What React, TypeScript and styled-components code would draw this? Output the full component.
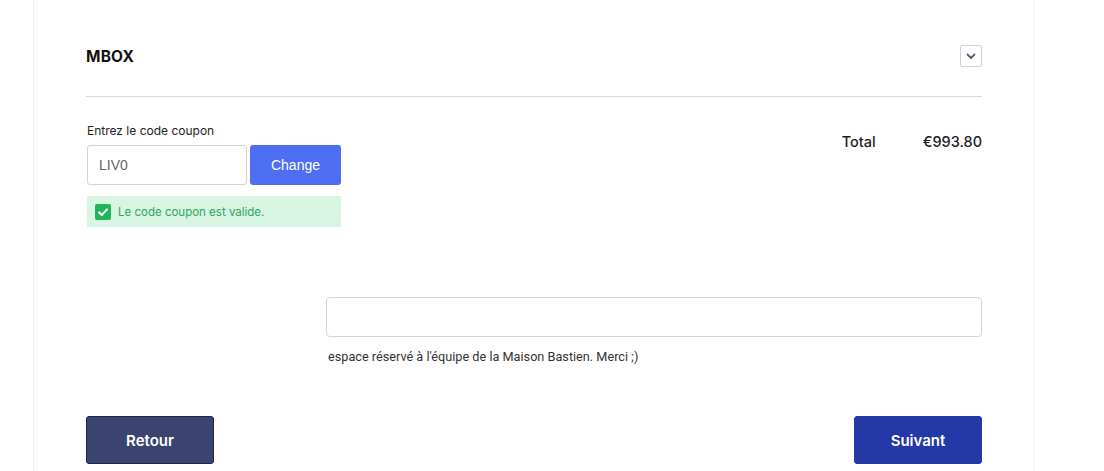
import React from 'react'
import styled, { createGlobalStyle } from 'styled-components'

const GlobalStyle = createGlobalStyle`
  html, body {
    margin: 0;
    padding: 0;
    background: #ffffff;
    font-family: Inter, 'Noto Sans', sans-serif;
    color: #1b1b1b;
  }
`

const Page = styled.div`
  display: flex;
  padding-left: 34px;
  height: 471px;
  overflow: hidden;
`

const Card = styled.div`
  width: 1000px;
  box-sizing: border-box;
  padding: 0 52px;
  background: #fff;
  box-shadow: -1px 0 0 #f0f0f2, 1px 0 0 #f0f0f2;
`

const Header = styled.div`
  display: flex;
  align-items: center;
  justify-content: space-between;
  height: 97px;
  padding-top: 16px;
  box-sizing: border-box;
  border-bottom: 1px solid #d8d8de;
`

const Title = styled.h2`
  margin: 0;
  font-size: 15.5px;
  font-weight: 700;
  letter-spacing: 0.2px;
  color: #111;
`

const Toggle = styled.button`
  width: 22px;
  height: 22px;
  padding: 0;
  display: flex;
  align-items: center;
  justify-content: center;
  background: #fff;
  border: 1px solid #cfd0d8;
  border-radius: 2px;
  color: #5a5d75;
`

const Body = styled.div`
  display: flex;
  justify-content: space-between;
  padding-top: 26px;
`

const CouponBlock = styled.div`
  display: flex;
  flex-direction: column;
  width: 254px;
  padding-left: 1px;
`

const Label = styled.label`
  font-size: 12px;
  color: #222;
  margin-bottom: 7px;
`

const CouponRow = styled.div`
  display: flex;
  gap: 3px;
`

const CouponInput = styled.input`
  width: 160px;
  height: 40px;
  box-sizing: border-box;
  border: 1px solid #d4d4d8;
  border-radius: 3px;
  padding: 0 11px;
  font-family: 'Liberation Sans', Arial, sans-serif;
  font-size: 14px;
  color: #666;
  outline: none;
`

const ChangeButton = styled.button`
  width: 91px;
  height: 40px;
  border: none;
  border-radius: 3px;
  background: #4e6ef4;
  color: #fff;
  font-family: 'Liberation Sans', Arial, sans-serif;
  font-size: 14px;
`

const Success = styled.div`
  display: flex;
  align-items: center;
  gap: 7px;
  margin-top: 11px;
  height: 31px;
  padding-left: 8px;
  background: #d8f4e2;
  color: #2ca85a;
  font-size: 11.5px;
`

const TotalRow = styled.div`
  display: flex;
  gap: 47px;
  padding-top: 10px;
  font-size: 14.5px;
  font-weight: 500;
  color: #1e1e1e;
`

const NoteBlock = styled.div`
  display: flex;
  flex-direction: column;
  margin: 70px 0 0 240px;
`

const NoteInput = styled.input`
  height: 40px;
  box-sizing: border-box;
  border: 1px solid #d4d4d8;
  border-radius: 4px;
  outline: none;
`

const Caption = styled.div`
  margin-top: 12px;
  padding-left: 2px;
  font-family: Roboto, sans-serif;
  font-size: 12.7px;
  color: #333;
`

const Footer = styled.div`
  display: flex;
  justify-content: space-between;
  margin-top: 52px;
`

const NavButton = styled.button<{ $variant: 'back' | 'next' }>`
  width: 128px;
  height: 48px;
  border-radius: 3px;
  font-family: Inter, sans-serif;
  font-size: 15px;
  font-weight: 600;
  color: #fff;
  background: ${({ $variant }) => ($variant === 'back' ? '#3b4470' : '#2438a8')};
  border: 1px solid ${({ $variant }) => ($variant === 'back' ? '#1e2547' : '#2438a8')};
`

export default function App() {
  return (
    <>
      <GlobalStyle />
      <Page>
        <Card>
          <Header>
            <Title>MBOX</Title>
            <Toggle aria-label="toggle">
              <svg width="10" height="7" viewBox="0 0 10 7" fill="none">
                <path d="M1.5 1.5L5 5L8.5 1.5" stroke="currentColor" strokeWidth="1.8" strokeLinecap="round" strokeLinejoin="round" />
              </svg>
            </Toggle>
          </Header>
          <Body>
            <CouponBlock>
              <Label>Entrez le code coupon</Label>
              <CouponRow>
                <CouponInput defaultValue="LIV0" />
                <ChangeButton>Change</ChangeButton>
              </CouponRow>
              <Success>
                <svg width="16" height="16" viewBox="0 0 16 16">
                  <rect width="16" height="16" rx="2" fill="#22b45a" />
                  <path d="M4 8.2L6.8 11L12 5.4" stroke="#fff" strokeWidth="2" fill="none" strokeLinecap="round" strokeLinejoin="round" />
                </svg>
                Le code coupon est valide.
              </Success>
            </CouponBlock>
            <TotalRow>
              <span>Total</span>
              <span>€993.80</span>
            </TotalRow>
          </Body>
          <NoteBlock>
            <NoteInput />
            <Caption>espace réservé à l'équipe de la Maison Bastien. Merci ;)</Caption>
          </NoteBlock>
          <Footer>
            <NavButton $variant="back">Retour</NavButton>
            <NavButton $variant="next">Suivant</NavButton>
          </Footer>
        </Card>
      </Page>
    </>
  )
}
